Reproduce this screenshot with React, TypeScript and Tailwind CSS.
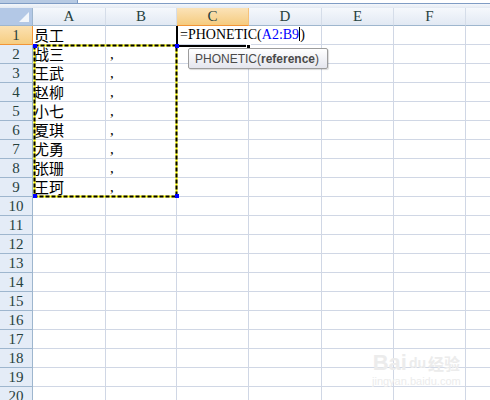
import React from "react";

const columns = [
  { label: "A", width: "w-[73px]" },
  { label: "B", width: "w-[71px]" },
  { label: "C", width: "w-[72px]" },
  { label: "D", width: "w-[73px]" },
  { label: "E", width: "w-[72px]" },
  { label: "F", width: "w-[72px]" },
];

const names = ["战三", "王武", "赵柳", "小七", "夏琪", "尤勇", "张珊", "王珂"];

const serif = "font-[family-name:'Liberation_Serif','Times_New_Roman',serif]";
const cjk = "font-[family-name:'Noto_Sans_CJK_SC',sans-serif]";
const sans = "font-[family-name:'Liberation_Sans',Arial,sans-serif]";

function RowHeader({ n, active }: { n: number; active?: boolean }) {
  return (
    <div
      className={`flex h-[19px] w-[33px] shrink-0 items-center justify-center border-r border-b text-[15px] text-[#27413e] ${serif} ${
        active
          ? "border-[#f29536] bg-gradient-to-b from-[#fbe1b2] to-[#f6cd80]"
          : "border-r-[#9eb6ce] border-b-[#9eb6ce] bg-[#e4ecf7]"
      }`}
    >
      {n}
    </div>
  );
}

export default function App() {
  const rows = Array.from({ length: 20 }, (_, i) => i + 1);

  return (
    <div className="relative h-[400px] w-[490px] overflow-hidden bg-white">
      {/* formula bar remains */}
      <div className="flex h-[3px]">
        <div className="w-[77px] bg-[#b7cae3]" />
        <div className="flex-1 border-l border-[#7f9cc4] bg-white" />
      </div>
      <div className="h-[5px] border-t border-[#7f9cc4] bg-gradient-to-b from-[#f4f7fb] to-[#e3e9f2]" />

      {/* column headers */}
      <div className="flex h-[18px]">
        <div className="relative w-[33px] shrink-0 border-r border-b border-[#9eb6ce] bg-[#b3c8e6]">
          <svg className="absolute right-[3px] bottom-[3px]" width="10" height="10">
            <polygon points="10,0 10,10 0,10" fill="#f2f6fb" />
          </svg>
        </div>
        {columns.map((c) => (
          <div
            key={c.label}
            className={`flex shrink-0 items-center justify-center border-r border-b text-[15px] text-[#27413e] ${serif} ${c.width} ${
              c.label === "C"
                ? "border-r-[#f6c27a] border-b-[#f29536] bg-gradient-to-b from-[#fbe3b8] to-[#f5cb7e]"
                : "border-r-[#d5dde9] border-b-[#9eb6ce] bg-gradient-to-b from-[#f5f8fc] to-[#e2e9f3]"
            }`}
          >
            {c.label}
          </div>
        ))}
        <div className="flex-1 border-b border-[#9eb6ce] bg-gradient-to-b from-[#f5f8fc] to-[#e2e9f3]" />
      </div>

      {/* rows */}
      {rows.map((r) => (
        <div key={r} className="flex h-[19px]">
          <RowHeader n={r} active={r === 1} />
          {columns.map((c) => {
            let content: React.ReactNode = null;
            if (c.label === "A" && r === 1) content = <span className={`text-[15px] ${cjk}`}>员工</span>;
            if (c.label === "A" && r >= 2 && r <= 9)
              content = <span className={`text-[15px] ${cjk}`}>{names[r - 2]}</span>;
            if (c.label === "B" && r >= 2 && r <= 9)
              content = <span className={`pl-[3px] text-[15px] ${serif}`}>,</span>;
            if (c.label === "C" && r === 1)
              content = (
                <span className={`relative z-10 pl-[2px] text-[14px] text-black ${serif}`}>
                  =PHONETIC(<span className="text-[#0000ff]">A2:B9</span>
                  <span className="inline-block h-[14px] w-px translate-y-[2px] bg-black" />)
                </span>
              );
            return (
              <div
                key={c.label}
                className={`flex shrink-0 items-end overflow-visible whitespace-nowrap border-b border-[#d0d7e5] pl-[1px] leading-[18px] ${c.width} ${
                  c.label === "C" && r === 1 ? "border-r border-r-transparent" : "border-r border-r-[#d0d7e5]"
                }`}
              >
                {content}
              </div>
            );
          })}
          <div className="flex-1 border-b border-[#d0d7e5]" />
        </div>
      ))}

      {/* active cell C1 */}
      <div className="absolute top-[26px] left-[176px] h-[21px] w-[74px] border-b-2 border-l-2 border-black" />
      <div className="absolute top-[44px] left-[246px] h-[5px] w-[5px] border border-white bg-black" />

      {/* marching ants around A2:B9 */}
      <svg className="absolute top-[44px] left-[32px]" width="150" height="158">
        <rect x="2.5" y="1.5" width="142" height="151" fill="none" stroke="#ffff00" strokeWidth="2" />
        <rect x="2.5" y="1.5" width="142" height="151" fill="none" stroke="#000" strokeWidth="2" strokeDasharray="4 2" />
        <rect x="1" y="0" width="4" height="4" fill="#0000ff" />
        <rect x="143" y="0" width="4" height="4" fill="#0000ff" />
        <rect x="1" y="150" width="4" height="4" fill="#0000ff" />
        <rect x="143" y="150" width="4" height="4" fill="#0000ff" />
      </svg>

      {/* function tooltip */}
      <div className={`absolute top-[48px] left-[188px] flex h-[21px] w-[140px] items-center rounded-[2px] border border-[#9c9c9c] bg-gradient-to-b from-white to-[#e5e6ee] pl-[6px] text-[12px] text-[#4a4a4a] shadow-[1px_1px_1px_rgba(0,0,0,0.15)] ${sans}`}>
        PHONETIC(<span className="font-bold">reference</span>)
      </div>

      {/* watermark */}
      <div className={`absolute top-[352px] left-[372px] flex flex-col items-center text-[#ececec] ${sans}`}>
        <div className="flex items-end gap-[2px] text-[22px] leading-[22px] font-bold">
          <span>Bai</span>
          <span className="text-[14px]">du</span>
          <span className={`text-[16px] ${cjk}`}>经验</span>
        </div>
        <div className="text-[11px] leading-[14px]">jingyan.baidu.com</div>
      </div>
    </div>
  );
}
